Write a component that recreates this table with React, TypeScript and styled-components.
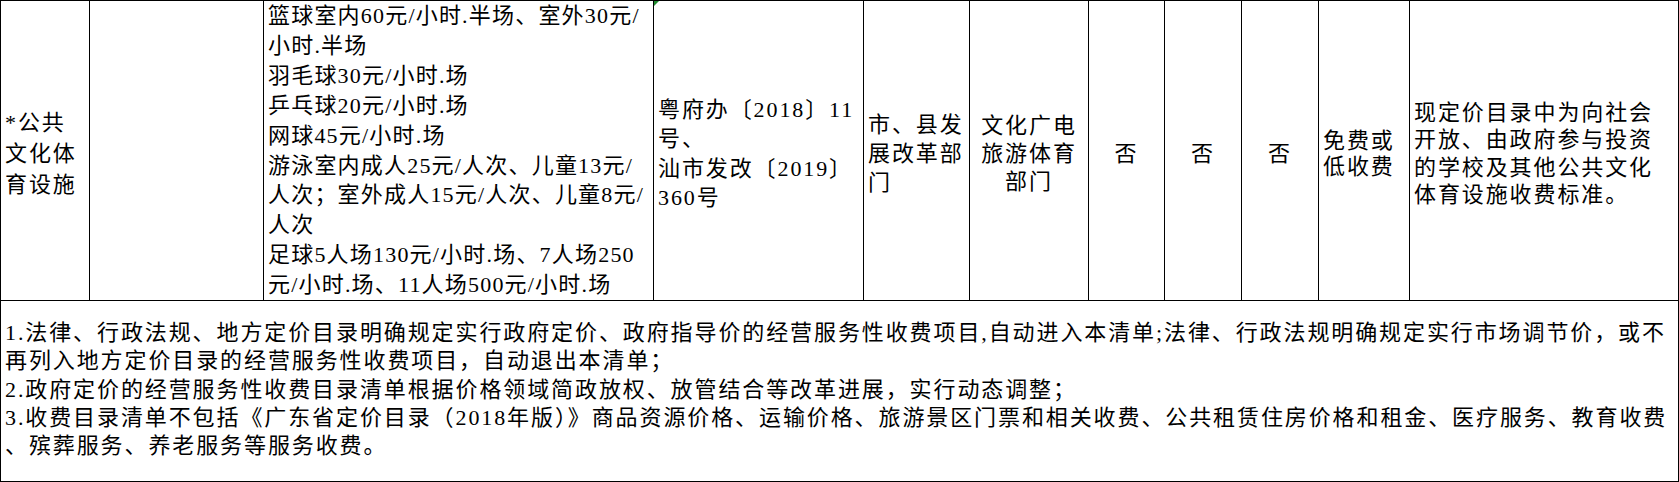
import React from 'react';
import styled, {createGlobalStyle} from 'styled-components';

const GlobalStyle = createGlobalStyle`
    html, body {
        margin: 0;
        padding: 0;
        background: #fff;
    }
    body {
        font-family: 'Liberation Serif', 'Noto Sans CJK SC', serif;
        color: #000;
    }
`;

// column widths, each includes its right border line
const COLUMNS = [89, 174, 390, 210, 106, 119, 76, 77, 77, 91, 269];

const PRICES = [
    '篮球室内60元/小时.半场、室外30元/',
    '小时.半场',
    '羽毛球30元/小时.场',
    '乒乓球20元/小时.场',
    '网球45元/小时.场',
    '游泳室内成人25元/人次、儿童13元/',
    '人次；室外成人15元/人次、儿童8元/',
    '人次',
    '足球5人场130元/小时.场、7人场250',
    '元/小时.场、11人场500元/小时.场',
];

const NOTES = [
    '1.法律、行政法规、地方定价目录明确规定实行政府定价、政府指导价的经营服务性收费项目,自动进入本清单;法律、行政法规明确规定实行市场调节价，或不',
    '再列入地方定价目录的经营服务性收费项目，自动退出本清单；',
    '2.政府定价的经营服务性收费目录清单根据价格领域简政放权、放管结合等改革进展，实行动态调整；',
    '3.收费目录清单不包括《广东省定价目录（2018年版）》商品资源价格、运输价格、旅游景区门票和相关收费、公共租赁住房价格和租金、医疗服务、教育收费',
    '、殡葬服务、养老服务等服务收费。',
];

const Sheet = styled.div`
    width: 1679px;
    height: 482px;
    box-sizing: border-box;
    border-top: 1px solid #000;
    border-left: 1px solid #000;
    display: grid;
    grid-template-columns: ${COLUMNS.map((w) => `${w}px`).join(' ')};
    grid-template-rows: 300px 181px;
`;

const Cell = styled.div<{$center?: boolean; $lh?: number}>`
    position: relative;
    box-sizing: border-box;
    border-right: 1px solid #000;
    border-bottom: 1px solid #000;
    display: flex;
    flex-direction: column;
    justify-content: center;
    align-items: ${(p) => (p.$center ? 'center' : 'flex-start')};
    padding: 6px 0 0 ${(p) => (p.$center ? 0 : 4)}px;
    font-size: 22px;
    letter-spacing: 1.9px;
    line-height: ${(p) => p.$lh ?? 30}px;
`;

const PriceCell = styled(Cell)`
    justify-content: flex-start;
    padding-top: 0;
    letter-spacing: 1.2px;
    line-height: 29.9px;
`;

const NoteCell = styled(Cell)`
    grid-column: 1 / -1;
    justify-content: flex-start;
    padding: 18px 0 0 4px;
    letter-spacing: 1.9px;
    line-height: 28.3px;
`;

const Line = styled.div`
    white-space: nowrap;
`;

const Marker = styled.span`
    position: absolute;
    top: 0;
    left: 0;
    width: 0;
    height: 0;
    border-top: 5px solid #1f8a2e;
    border-right: 5px solid transparent;
`;

const Lines = ({items}: {items: string[]}) => (
    <>
        {items.map((t, i) => (
            <Line key={i}>{t}</Line>
        ))}
    </>
);

export default function App() {
    return (
        <>
            <GlobalStyle/>
            <Sheet>
                <Cell $lh={31}>
                    <Lines items={['*公共', '文化体', '育设施']}/>
                </Cell>
                <Cell/>
                <PriceCell>
                    <Lines items={PRICES}/>
                </PriceCell>
                <Cell $lh={29.5}>
                    <Marker/>
                    <Lines items={['粤府办〔2018〕11', '号、', '汕市发改〔2019〕', '360号']}/>
                </Cell>
                <Cell $lh={29}>
                    <Lines items={['市、县发', '展改革部', '门']}/>
                </Cell>
                <Cell $center $lh={28}>
                    <Lines items={['文化广电', '旅游体育', '部门']}/>
                </Cell>
                <Cell $center>否</Cell>
                <Cell $center>否</Cell>
                <Cell $center>否</Cell>
                <Cell $lh={26}>
                    <Lines items={['免费或', '低收费']}/>
                </Cell>
                <Cell $lh={27.5}>
                    <Lines items={['现定价目录中为向社会', '开放、由政府参与投资', '的学校及其他公共文化', '体育设施收费标准。']}/>
                </Cell>
                <NoteCell>
                    <Lines items={NOTES}/>
                </NoteCell>
            </Sheet>
        </>
    );
}
